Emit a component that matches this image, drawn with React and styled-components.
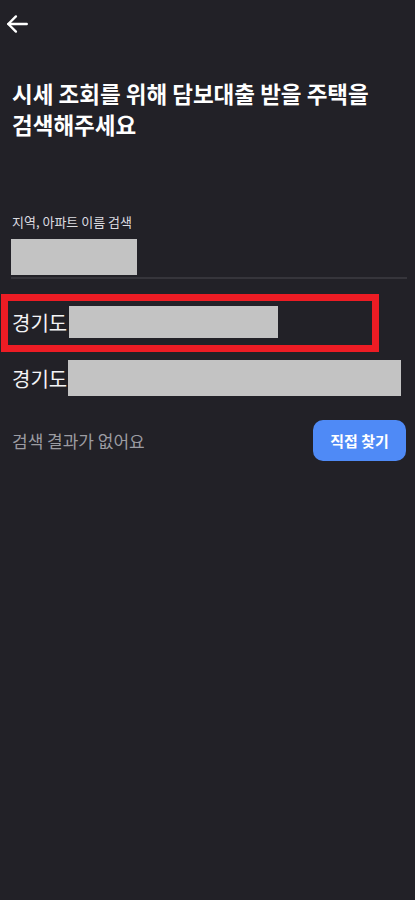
import React from 'react';
import styled, { createGlobalStyle } from 'styled-components';

const Global = createGlobalStyle`
  html, body {
    margin: 0;
    padding: 0;
    background: #222127;
  }
  body {
    font-family: 'Noto Sans CJK KR', 'Noto Sans', sans-serif;
  }
`;

const Page = styled.div`
  width: 415px;
  min-height: 900px;
  background: #222127;
  color: #fff;
  display: flex;
  flex-direction: column;
`;

const TopBar = styled.div`
  height: 48px;
  display: flex;
  align-items: center;
  padding-left: 4px;
`;

const Title = styled.h1`
  margin: 30px 0 0;
  padding: 0 12px;
  font-size: 22.5px;
  font-weight: 700;
  line-height: 31px;
`;

const Field = styled.div`
  margin: 72px 8px 0 11px;
  display: flex;
  flex-direction: column;
  border-bottom: 2px solid #36353b;
  padding-bottom: 2px;
`;

const Label = styled.div`
  font-size: 13px;
  color: #dcdce0;
  padding-left: 1px;
  margin-bottom: 8px;
`;

const Masked = styled.div`
  flex-shrink: 0;
  background: #c3c3c3;
  width: ${(p) => p.w}px;
  height: ${(p) => p.h}px;
`;

const List = styled.div`
  position: relative;
  display: flex;
  flex-direction: column;
  gap: 22px;
  margin-top: 27px;
  padding: 0 12px;
`;

const Row = styled.div`
  display: flex;
  align-items: center;
  gap: ${(p) => p.gap}px;
  font-size: 20px;
  color: #f4f4f6;
  white-space: nowrap;
`;

const Highlight = styled.div`
  position: absolute;
  left: 1px;
  top: -12px;
  width: 364px;
  height: 44px;
  border: 7px solid #ed1c24;
`;

const Empty = styled.div`
  display: flex;
  align-items: center;
  justify-content: space-between;
  margin-top: 24px;
  padding: 0 9px 0 12px;
`;

const EmptyText = styled.span`
  font-size: 17px;
  color: #9c9ca2;
`;

const Button = styled.button`
  width: 93px;
  height: 41px;
  border: 0;
  border-radius: 10px;
  background: #4f8af6;
  color: #fff;
  font-family: inherit;
  font-size: 15px;
  font-weight: 700;
`;

export default function App() {
  return (
    <Page>
      <Global />
      <TopBar>
        <svg width="26" height="26" viewBox="0 0 24 24" fill="none" stroke="#fff" strokeWidth="2.2" strokeLinecap="round" strokeLinejoin="round">
          <path d="M21 12H4" />
          <path d="M11 5l-7 7 7 7" />
        </svg>
      </TopBar>
      <Title>
        시세 조회를 위해 담보대출 받을 주택을
        <br />
        검색해주세요
      </Title>
      <Field>
        <Label>지역, 아파트 이름 검색</Label>
        <Masked w={126} h={36} />
      </Field>
      <List>
        <Highlight />
        <Row gap={2}>
          경기도 <Masked w={209} h={32} />
        </Row>
        <Row gap={1}>
          경기도 <Masked w={333} h={36} />
        </Row>
      </List>
      <Empty>
        <EmptyText>검색 결과가 없어요</EmptyText>
        <Button>직접 찾기</Button>
      </Empty>
    </Page>
  );
}
